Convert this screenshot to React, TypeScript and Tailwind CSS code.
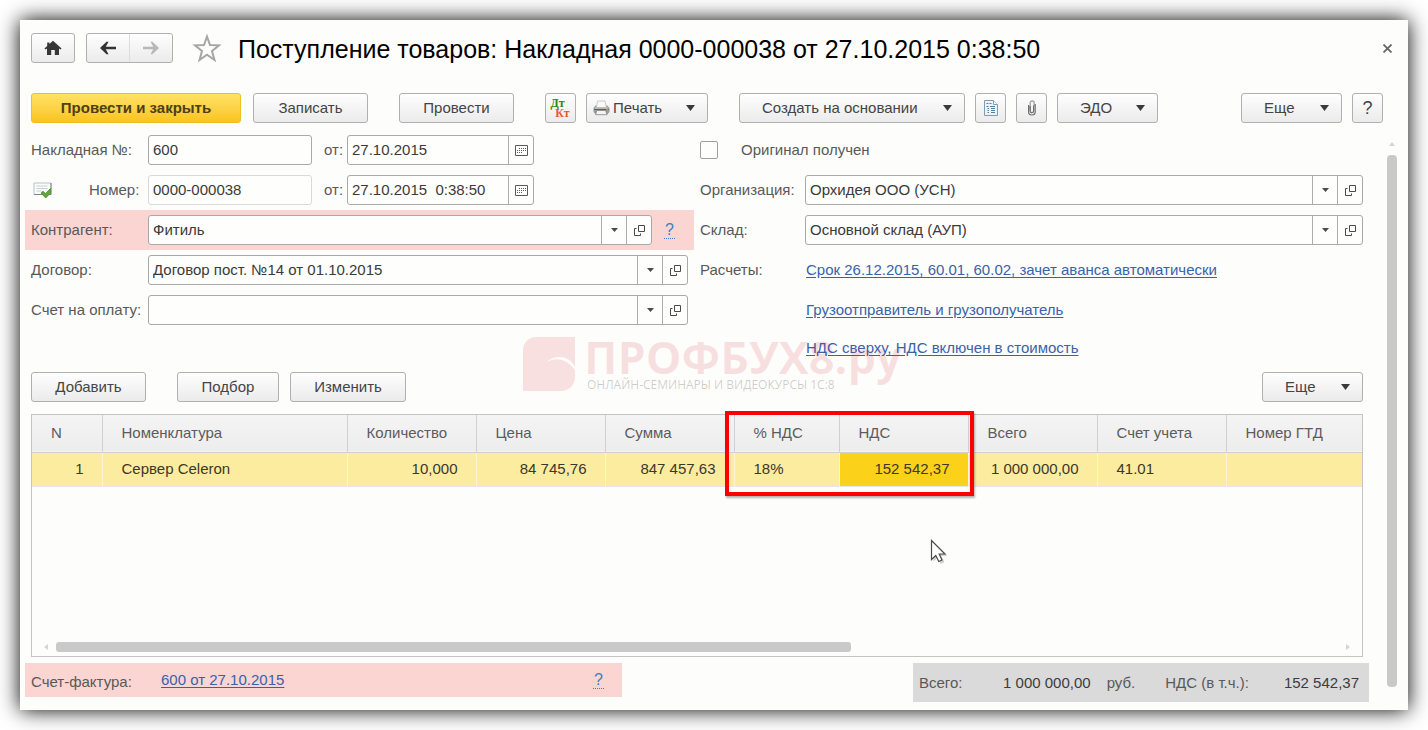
import type { ReactNode } from "react";
import clsx from "clsx";

function Caret({ small = false }: { small?: boolean }) {
  return small ? (
    <svg width="7" height="4" viewBox="0 0 7 4" aria-hidden="true">
      <path d="M0 0h7L3.5 4z" fill="#4a4a4a" />
    </svg>
  ) : (
    <svg width="9" height="6" viewBox="0 0 9 6" aria-hidden="true">
      <path d="M0 0h9L4.5 6z" fill="#3a3a3a" />
    </svg>
  );
}

function HomeIcon() {
  return (
    <svg width="18" height="16" viewBox="0 0 18 16" aria-hidden="true">
      <path
        d="M9 .8 17.6 8.6 16.4 9.6 15 8.6V15h-4.200V10H7.200V15H3V8.6L1.6 9.6.4 8.6 3.2 6V2.4h2.2V4z"
        fill="#363636"
      />
    </svg>
  );
}

function ArrowIcon({ back = false }: { back?: boolean }) {
  return (
    <svg width="18" height="14" viewBox="0 0 18 14" aria-hidden="true">
      {back ? (
        <path d="M1 7l6.500-6.200h2L6.800 5.700H17v2.600H6.800l2.700 4.900h-2z" fill="#333333" />
      ) : (
        <path d="M17 7L10.500.800h-2l2.700 4.900H1v2.600h10.200L8.500 13.200h2z" fill="#b8b8b8" />
      )}
    </svg>
  );
}

function StarIcon() {
  return (
    <svg width="30" height="28" viewBox="0 0 30 28" aria-hidden="true">
      <path
        d="M15 2.500l3 8.500 9 .300-7 5.700 2.500 9L15 20.800 7.500 26l2.500-9-7-5.700 9-.300z"
        fill="#fdfdfb"
        stroke="#a6a6a6"
        strokeWidth="2"
      />
    </svg>
  );
}

function PrinterIcon() {
  return (
    <svg width="17" height="16" viewBox="0 0 17 16" aria-hidden="true">
      <path d="M4.500 1h7.500l1.500 6.500h-10z" fill="#fafafa" stroke="#bdbdbd" strokeWidth=".8" />
      <path d="M2.500 5.500h1l-.4 2h10.600l-.6-2h1.200L16.500 8v4l-2 2.200h-12l-2-2.200V8z" fill="#9c9c9c" />
      <path d="M1 9h15v1H1z" fill="#5f5f5f" />
      <path d="M2 7.500h12.800l.8 1H1.200z" fill="#cfcfcf" />
      <path d="M3.800 10.500h8.800l1.400 4.200H2.600z" fill="#f4f4f4" stroke="#848484" strokeWidth=".8" />
      <path d="M13 8.500h2.200v1.200H13z" fill="#e0a44c" />
    </svg>
  );
}

function DocumentIcon() {
  return (
    <svg width="16" height="18" viewBox="0 0 16 18" aria-hidden="true">
      <path d="M1.500 1.500h9L14.500 5.500v11h-13z" fill="#eaf3f8" stroke="#7f9cb0" />
      <path d="M10.500 1.500v4h4" fill="#fff" stroke="#7f9cb0" />
      <path
        d="M3.500 4.500h2M6.500 4.500h2M3.500 7.500h2M7 7.500h5M4.500 9.500h1.500M8 9.500h4M4.500 11.500h1.500M8 11.500h4M4.500 13.500h1.500M8 13.500h4"
        stroke="#5d7d94"
      />
    </svg>
  );
}

function ClipIcon() {
  return (
    <svg width="10" height="18" viewBox="0 0 10 18" aria-hidden="true">
      <path
        d="M3.200 11.500V4a2 2 0 0 1 4 0v3"
        fill="none"
        stroke="#a5a5a5"
        strokeWidth="1.400"
      />
      <path
        d="M3.200 7v5a1.700 1.700 0 0 0 3.400 0V6.500M1.600 6v7a3.300 3 0 0 0 6.600 0V5"
        fill="none"
        stroke="#707070"
        strokeWidth="1.200"
      />
    </svg>
  );
}

function CalendarIcon() {
  return (
    <svg width="13" height="11" viewBox="0 0 13 11" aria-hidden="true">
      <path d="M.5.500h12v10H.5z" fill="#fff" stroke="#5a5a5a" />
      <path
        d="M4 3.500h7M2 5.500h9M2 7.500h5"
        stroke="#5a5a5a"
        strokeDasharray="1 1"
      />
    </svg>
  );
}

function OpenIcon() {
  return (
    <svg width="11" height="11" viewBox="0 0 11 11" aria-hidden="true">
      <path d="M4.500.500h6v6h-6z" fill="none" stroke="#4a4a4a" />
      <path d="M2.500 3.500h-2v7h6v-2" fill="none" stroke="#4a4a4a" />
    </svg>
  );
}

function PostedIcon() {
  return (
    <svg width="19" height="17" viewBox="0 0 19 17" aria-hidden="true">
      <path d="M1 1h17v11.500H1z" fill="#fbfcfc" stroke="#b9c0c4" />
      <path d="M1 12.500h17M18 1v11.500" stroke="#7d868b" />
      <path d="M3.500 4h11M3.500 6.500h11M3.500 9h5" stroke="#c6d0d5" />
      <path d="M8 11l2-1.800 2.400 2.300L17.500 6.500V11l-4.800 5z" fill="#5fa83a" stroke="#3f8424" strokeWidth=".7" />
    </svg>
  );
}

type ButtonProps = {
  children: ReactNode;
  className?: string;
  label?: string;
};

function ToolButton({ children, className, label }: ButtonProps) {
  return (
    <button
      type="button"
      aria-label={label}
      className={clsx(
        "flex h-[30px] shrink-0 items-center justify-center rounded-[3px] border border-[#b0b0b0] bg-linear-to-b from-[#fefefe] to-[#ebebeb] text-[#444444]",
        className,
      )}
    >
      {children}
    </button>
  );
}

function MenuButton({ children, className }: ButtonProps) {
  return (
    <ToolButton className={className}>
      <span className="flex-1 pl-[2px] text-left">{children}</span>
      <Caret />
    </ToolButton>
  );
}

function FieldButton({ children, label }: { children: ReactNode; label: string }) {
  return (
    <button
      type="button"
      aria-label={label}
      className="flex w-[25px] shrink-0 items-center justify-center border-l border-[#adadad]"
    >
      {children}
    </button>
  );
}

type FieldProps = {
  id: string;
  value: string;
  kind?: "plain" | "date" | "ref";
  readOnly?: boolean;
  className?: string;
};

function Field({ id, value, kind = "plain", readOnly = false, className }: FieldProps) {
  return (
    <div
      className={clsx(
        "flex h-[30px] min-w-0 rounded-[3px] border bg-[#fefefd]",
        readOnly ? "border-[#d9d9d9]" : "border-[#a9a9a9]",
        className,
      )}
    >
      <input
        id={id}
        type="text"
        defaultValue={value}
        readOnly={readOnly}
        className="w-full min-w-0 flex-1 bg-transparent px-1 text-[#3a3a3a] outline-none"
      />
      {kind === "date" && (
        <FieldButton label="Выбрать дату">
          <CalendarIcon />
        </FieldButton>
      )}
      {kind === "ref" && (
        <>
          <FieldButton label="Выбрать из списка">
            <Caret small />
          </FieldButton>
          <FieldButton label="Открыть">
            <OpenIcon />
          </FieldButton>
        </>
      )}
    </div>
  );
}

function Label({ htmlFor, children, className }: { htmlFor: string; children: ReactNode; className?: string }) {
  return (
    <label htmlFor={htmlFor} className={clsx("shrink-0 whitespace-nowrap text-[#595959]", className)}>
      {children}
    </label>
  );
}

function Row({ children, className }: { children: ReactNode; className?: string }) {
  return <div className={clsx("flex h-10 items-center px-[6px]", className)}>{children}</div>;
}

function TextLink({ children }: { children: ReactNode }) {
  return (
    <a href="#" className="whitespace-nowrap text-[#3a62ab] underline underline-offset-2">
      {children}
    </a>
  );
}

function HelpLink() {
  return (
    <a
      href="#"
      aria-label="Справка"
      className="border-b border-dotted border-[#3f7fc4] px-px text-base leading-4 text-[#3f7fc4]"
    >
      ?
    </a>
  );
}

const columns = [
  { title: "N", value: "1", width: "w-[70px]", right: true },
  { title: "Номенклатура", value: "Сервер Celeron", width: "" },
  { title: "Количество", value: "10,000", width: "w-[129px]", right: true },
  { title: "Цена", value: "84 745,76", width: "w-[129px]", right: true },
  { title: "Сумма", value: "847 457,63", width: "w-[129px]", right: true },
  { title: "% НДС", value: "18%", width: "w-[105px]" },
  { title: "НДС", value: "152 542,37", width: "w-[129px]", right: true, active: true },
  { title: "Всего", value: "1 000 000,00", width: "w-[129px]", right: true },
  { title: "Счет учета", value: "41.01", width: "w-[129px]" },
  { title: "Номер ГТД", value: "", width: "w-[136px]" },
];

function GoodsTable() {
  return (
    <div className="relative mx-[6px] mt-3 flex flex-1 flex-col border border-[#c4c4c4]">
      <table className="w-full table-fixed border-collapse">
        <thead>
          <tr className="h-[37px] border-b border-[#d0d0d0] bg-linear-to-b from-[#f4f4f4] to-[#ededed]">
            {columns.map((c) => (
              <th
                key={c.title}
                scope="col"
                className={clsx(
                  "border-r border-[#d0d0d0] pr-[18px] pl-[19px] text-left font-normal whitespace-nowrap text-[#5c5c5c] last:border-r-0",
                  c.width,
                )}
              >
                {c.title}
              </th>
            ))}
          </tr>
        </thead>
        <tbody>
          <tr className="h-[34px] border-b border-[#e6e6e6]">
            {columns.map((c) => (
              <td
                key={c.title}
                className={clsx(
                  "border-r border-[#fdf6d5] pr-[18px] pl-[19px] whitespace-nowrap text-[#3c3829] last:border-r-0",
                  c.right && "text-right",
                  c.active ? "bg-[#fcd11a]" : "bg-[#fcec9f]",
                )}
              >
                {c.value}
              </td>
            ))}
          </tr>
        </tbody>
      </table>
      <div className="mt-auto flex h-[18px] items-center justify-between px-3">
        <svg width="4" height="6" viewBox="0 0 4 6" aria-hidden="true">
          <path d="M4 0v6L0 3z" fill="#d5d5d5" />
        </svg>
        <div className="mx-2 flex-1">
          <div className="h-[10px] w-[62%] rounded-[3px] bg-[#c9c9c9]" />
        </div>
        <svg width="4" height="6" viewBox="0 0 4 6" aria-hidden="true">
          <path d="M0 0v6l4-3z" fill="#d5d5d5" />
        </svg>
      </div>
      <div className="pointer-events-none absolute -top-[4px] right-[388px] h-[85px] w-[249px] border-4 border-[#fe0000] shadow-[1px_2px_2px_rgba(0,0,0,0.3)]" />
      <svg
        className="pointer-events-none absolute top-[124px] right-[412px]"
        width="20"
        height="28"
        viewBox="0 0 20 28"
        aria-hidden="true"
      >
        <path d="M3.500 3.500v19l4.300-4 3 6.500 3.600-1.700-3-6.300h6z" fill="#000" opacity=".18" />
        <path
          d="M1.500 1.500v19l4.300-4 3 6 3.200-1.500-2.800-6h5.800z"
          fill="#fff"
          stroke="#4a4a4a"
          strokeWidth="1.200"
        />
      </svg>
    </div>
  );
}

function Watermark() {
  return (
    <div className="pointer-events-none absolute top-[205px] left-[498px] flex" aria-hidden="true">
      <svg width="52" height="54" viewBox="0 0 52 54" className="mt-[2px]">
        <path d="M13 0h39v40a14 14 0 0 1-14 14H0V13A13 13 0 0 1 13 0z" fill="#d9141e" opacity=".12" />
        <path d="M24 25c5-6 21-9 28 5v3c-7-10-18-14-28-8z" fill="#fdfdfb" />
      </svg>
      <div className="ml-[9px] whitespace-nowrap">
        <div className="font-['Open_Sans',sans-serif] text-[45px] leading-[43px] font-bold text-[#d9141e]/12">
          ПРОФБУХ8.ру
        </div>
        <div className="pl-[3px] font-['Open_Sans',sans-serif] text-xs leading-[14px] text-black/20">
          ОНЛАЙН-СЕМИНАРЫ И ВИДЕОКУРСЫ 1С:8
        </div>
      </div>
    </div>
  );
}

export default function App() {
  return (
    <div className="flex min-h-screen bg-white p-5 font-['Liberation_Sans',Arial,sans-serif] text-[15px] leading-5">
      <main className="flex min-w-0 flex-1 flex-col bg-[#fdfdfb] pb-2 shadow-[0_0_20px_0_#000000]">
        <header className="flex items-center pt-[13px] pr-[14px] pl-[11px]">
          <ToolButton label="Начальная страница" className="w-11">
            <HomeIcon />
          </ToolButton>
          <div className="ml-[11px] flex h-[30px] rounded-[3px] border border-[#b0b0b0] bg-linear-to-b from-[#fefefe] to-[#ebebeb]">
            <button type="button" aria-label="Назад" className="flex w-[43px] items-center justify-center border-r border-[#dcdcdc]">
              <ArrowIcon back />
            </button>
            <button type="button" aria-label="Вперед" className="flex w-[42px] items-center justify-center">
              <ArrowIcon />
            </button>
          </div>
          <button type="button" aria-label="В избранное" className="ml-[19px]">
            <StarIcon />
          </button>
          <h1 className="ml-4 flex-1 pt-[2px] text-[25px] leading-7 whitespace-nowrap text-black">
            Поступление товаров: Накладная 0000-000038 от 27.10.2015 0:38:50
          </h1>
          <button type="button" aria-label="Закрыть" className="p-[2px]">
            <svg width="9" height="9" viewBox="0 0 9 9" aria-hidden="true">
              <path d="M.5.500l8 8M8.500.500l-8 8" stroke="#666666" strokeWidth="1.800" />
            </svg>
          </button>
        </header>

        <div className="mt-[30px] flex pr-[25px] pl-[11px]">
          <button
            type="button"
            className="h-[30px] w-[210px] rounded-[3px] border border-[#eebf22] bg-linear-to-b from-[#ffe263] to-[#fac41a] font-bold text-[#4d4016]"
          >
            Провести и закрыть
          </button>
          <ToolButton className="ml-3 w-[115px]">Записать</ToolButton>
          <ToolButton className="ml-[31px] w-[115px]">Провести</ToolButton>
          <ToolButton label="Дебет Кредит" className="ml-[31px] w-[31px]">
            <span className="flex flex-col font-['Liberation_Serif',serif] text-xs leading-[10px] font-bold">
              <span className="pr-[6px] text-[#2c8a12]">Дт</span>
              <span className="pl-1 text-[#f2503c]">Кт</span>
            </span>
          </ToolButton>
          <ToolButton className="ml-[10px] w-[122px] pr-3 pl-[6px]">
            <PrinterIcon />
            <span className="ml-[3px] flex-1 text-left">Печать</span>
            <Caret />
          </ToolButton>
          <MenuButton className="ml-[31px] w-[226px] pr-3 pl-5">Создать на основании</MenuButton>
          <ToolButton label="Структура подчиненности" className="ml-[10px] w-[31px]">
            <DocumentIcon />
          </ToolButton>
          <ToolButton label="Присоединенные файлы" className="ml-[10px] w-[31px]">
            <ClipIcon />
          </ToolButton>
          <MenuButton className="ml-[10px] w-[101px] pr-3 pl-5">ЭДО</MenuButton>
          <MenuButton className="ml-auto w-[101px] pr-3 pl-5">Еще</MenuButton>
          <ToolButton className="ml-[10px] w-[31px] text-lg">?</ToolButton>
        </div>

        <div className="mt-[7px] flex flex-1 pr-[11px] pl-[5px]">
          <div className="relative flex min-w-0 flex-1 flex-col">
            <div className="grid grid-cols-2 gap-[6px]">
              <div>
                <Row>
                  <Label htmlFor="invoice" className="w-[117px]">
                    Накладная №:
                  </Label>
                  <Field id="invoice" value="600" className="w-[164px]" />
                  <Label htmlFor="invoice-date" className="ml-3 w-[23px]">
                    от:
                  </Label>
                  <Field id="invoice-date" value="27.10.2015" kind="date" className="w-[187px]" />
                </Row>
                <Row>
                  <span className="ml-[2px] w-[56px]">
                    <PostedIcon />
                  </span>
                  <Label htmlFor="number" className="w-[59px]">
                    Номер:
                  </Label>
                  <Field id="number" value="0000-000038" readOnly className="w-[164px]" />
                  <Label htmlFor="number-date" className="ml-3 w-[23px]">
                    от:
                  </Label>
                  <Field id="number-date" value="27.10.2015  0:38:50" kind="date" className="w-[187px]" />
                </Row>
                <Row className="bg-[#fad5d2]">
                  <Label htmlFor="partner" className="w-[117px]">
                    Контрагент:
                  </Label>
                  <Field id="partner" value="Фитиль" kind="ref" className="mr-3 flex-1" />
                  <span className="w-6">
                    <HelpLink />
                  </span>
                </Row>
                <Row>
                  <Label htmlFor="contract" className="w-[117px]">
                    Договор:
                  </Label>
                  <Field id="contract" value="Договор пост. №14 от 01.10.2015" kind="ref" className="flex-1" />
                </Row>
                <Row>
                  <Label htmlFor="bill" className="w-[117px]">
                    Счет на оплату:
                  </Label>
                  <Field id="bill" value="" kind="ref" className="flex-1" />
                </Row>
              </div>
              <div>
                <Row className="pl-0">
                  <input
                    id="original"
                    type="checkbox"
                    className="size-[18px] appearance-none rounded-[2px] border border-[#9f9f9f] bg-[#fefefd] checked:bg-[#fcd11a]"
                  />
                  <Label htmlFor="original" className="ml-[23px]">
                    Оригинал получен
                  </Label>
                </Row>
                <Row className="pl-0">
                  <Label htmlFor="company" className="w-[105px]">
                    Организация:
                  </Label>
                  <Field id="company" value="Орхидея ООО (УСН)" kind="ref" className="flex-1" />
                </Row>
                <Row className="pl-0">
                  <Label htmlFor="store" className="w-[105px]">
                    Склад:
                  </Label>
                  <Field id="store" value="Основной склад (АУП)" kind="ref" className="flex-1" />
                </Row>
                <Row className="pl-0">
                  <span className="w-[106px] shrink-0 text-[#595959]">Расчеты:</span>
                  <TextLink>Срок 26.12.2015, 60.01, 60.02, зачет аванса автоматически</TextLink>
                </Row>
                <Row className="pl-[106px]">
                  <TextLink>Грузоотправитель и грузополучатель</TextLink>
                </Row>
                <div className="flex h-9 items-center pl-[106px]">
                  <TextLink>НДС сверху, НДС включен в стоимость</TextLink>
                </div>
              </div>
            </div>

            <div className="mt-[6px] flex px-[6px]">
              <ToolButton className="w-[115px]">Добавить</ToolButton>
              <ToolButton className="ml-[31px] w-[102px]">Подбор</ToolButton>
              <ToolButton className="ml-[11px] w-[116px]">Изменить</ToolButton>
              <MenuButton className="ml-auto w-[101px] pr-3 pl-5">Еще</MenuButton>
            </div>

            <GoodsTable />

            <div className="mt-[6px] flex h-[39px] items-start justify-between">
              <div className="flex h-[34px] w-[597px] items-center bg-[#fad5d2] px-[6px] text-[#595959]">
                <span className="w-[130px] pt-1">Счет-фактура:</span>
                <TextLink>600 от 27.10.2015</TextLink>
                <span className="mr-3 ml-auto">
                  <HelpLink />
                </span>
              </div>
              <div className="flex h-full w-[456px] items-center bg-[#dadada] px-[6px] text-[#595959]">
                <span>Всего:</span>
                <span className="ml-auto text-[#3c3c3c]">1 000 000,00</span>
                <span className="ml-4">руб.</span>
                <span className="ml-[30px]">НДС (в т.ч.):</span>
                <span className="mr-1 ml-[35px] text-[#3c3c3c]">152 542,37</span>
              </div>
            </div>
            <Watermark />
          </div>

          <div className="flex w-7 flex-col items-end pt-3 pb-[15px]" aria-hidden="true">
            <svg width="6" height="4" viewBox="0 0 6 4" className="mr-[2px] mb-[9px]">
              <path d="M0 4h6L3 0z" fill="#d5d5d5" />
            </svg>
            <div className="w-[10px] flex-1 rounded-[4px] bg-[#c9c9c9]" />
          </div>
        </div>
      </main>
    </div>
  );
}
